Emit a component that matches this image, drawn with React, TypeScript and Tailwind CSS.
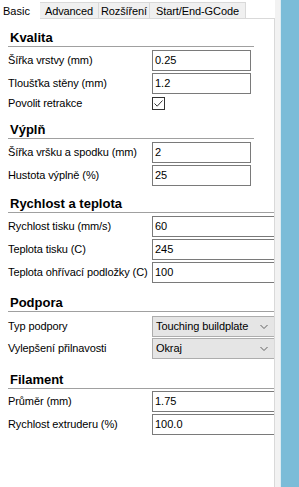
import React from "react";

const font = "font-['Liberation_Sans',Arial,sans-serif]";

function Header({ title, h, wide }: { title: string; h: string; wide?: boolean }) {
  return (
    <div className={`${h} ml-[8px] ${wide ? "w-[300px]" : "w-[246px]"} flex items-end border-b border-[#a0a0a0]`}>
      <span className="pl-[2px] text-[13px] leading-[16px] font-bold text-black">{title}</span>
    </div>
  );
}

function Row({ label, children, h = "h-[21px]" }: { label: string; children: React.ReactNode; h?: string }) {
  return (
    <div className={`flex items-center ${h} ml-[8px]`}>
      <div className="w-[144px] shrink-0 text-[11px] leading-[13px] tracking-[-0.1px] text-black whitespace-nowrap">{label}</div>
      {children}
    </div>
  );
}

function Input({ value, wide }: { value: string; wide?: boolean }) {
  return (
    <div
      className={`${wide ? "w-[140px]" : "w-[99px]"} shrink-0 h-[21px] border border-[#7a7a7a] bg-white flex items-center pl-[2px] text-[11px] text-black`}
    >
      {value}
    </div>
  );
}

function Select({ value }: { value: string }) {
  return (
    <div className="relative w-[140px] shrink-0 h-[21px] border border-[#adadad] bg-[#e5e5e5] flex items-center pl-[3px] text-[11px] tracking-[-0.1px] text-black">
      {value}
      <svg className="absolute left-[107px] top-[7px]" width="8" height="6" viewBox="0 0 8 6">
        <path d="M0.5 1 L4 4.5 L7.5 1" fill="none" stroke="#606060" strokeWidth="1" />
      </svg>
    </div>
  );
}

function Tab({ label, active, w }: { label: string; active?: boolean; w: string }) {
  if (active) {
    return (
      <div className={`${w} shrink-0 h-[19px] bg-white flex items-start pt-[3px] pl-[3px] text-[11px] text-black z-10 whitespace-nowrap`}>
        {label}
      </div>
    );
  }
  return (
    <div
      className={`${w} shrink-0 h-[17px] mt-[2px] bg-[#f0f0f0] border-t border-r border-[#d9d9d9] flex items-center justify-center text-[11px] tracking-[-0.1px] text-black whitespace-nowrap`}
    >
      {label}
    </div>
  );
}

export default function App() {
  return (
    <div className={`${font} w-[299px] h-[487px] flex bg-white overflow-hidden`}>
      <div className="w-[275px] h-full flex flex-col">
        <div className="h-[19px] flex items-end shrink-0 relative">
          <Tab label="Basic" active w="w-[40px]" />
          <Tab label="Advanced" w="w-[59px]" />
          <Tab label="Rozšíření" w="w-[51px]" />
          <Tab label="Start/End-GCode" w="w-[96px]" />
          <div className="absolute left-0 right-0 bottom-0 h-px bg-[#d9d9d9]" />
          <div className="absolute left-0 w-[40px] bottom-0 h-px bg-white z-10" />
        </div>
        <div className="flex-1 border-r border-[#d9d9d9] overflow-hidden">
          <Header title="Kvalita" h="h-[28px]" />
          <div className="mt-[3px] flex flex-col gap-[2px]">
            <Row label="Šířka vrstvy (mm)"><Input value="0.25" /></Row>
            <Row label="Tloušťka stěny (mm)"><Input value="1.2" /></Row>
            <Row label="Povolit retrakce" h="h-[15px]">
              <div className="w-[13px] h-[13px] border border-[#333333] bg-white flex items-center justify-center">
                <svg width="11" height="11" viewBox="0 0 11 11">
                  <path d="M1.5 5.5 L4.2 8.2 L9.5 2.5" fill="none" stroke="#333333" strokeWidth="1" />
                </svg>
              </div>
            </Row>
          </div>

          <Header title="Výplň" h="h-[28px]" />
          <div className="mt-[3px] flex flex-col gap-[2px]">
            <Row label="Šířka vršku a spodku (mm)"><Input value="2" /></Row>
            <Row label="Hustota výplně (%)"><Input value="25" /></Row>
          </div>

          <Header title="Rychlost a teplota" h="h-[27px]" wide />
          <div className="mt-[3px] flex flex-col gap-[2px]">
            <Row label="Rychlost tisku (mm/s)"><Input value="60" wide /></Row>
            <Row label="Teplota tisku (C)"><Input value="245" wide /></Row>
            <Row label="Teplota ohřívací podložky (C)"><Input value="100" wide /></Row>
          </div>

          <Header title="Podpora" h="h-[29px]" wide />
          <div className="mt-[4px] flex flex-col gap-[1px]">
            <Row label="Typ podpory"><Select value="Touching buildplate" /></Row>
            <Row label="Vylepšení přilnavosti"><Select value="Okraj" /></Row>
          </div>

          <Header title="Filament" h="h-[30px]" wide />
          <div className="mt-[2px] flex flex-col gap-[2px]">
            <Row label="Průměr (mm)"><Input value="1.75" wide /></Row>
            <Row label="Rychlost extruderu (%)"><Input value="100.0" wide /></Row>
          </div>
        </div>
      </div>
      <div className="w-[6px] h-full bg-[#f2f2f2] border-r border-[#dcebf2]" />
      <div className="flex-1 h-full bg-[#7bbcd8]" />
    </div>
  );
}
